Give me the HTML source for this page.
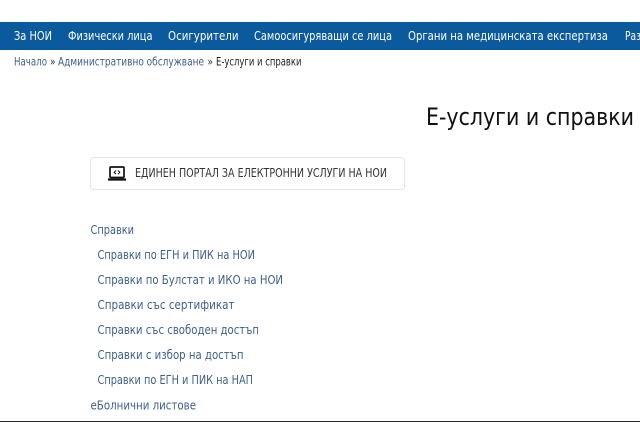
<!DOCTYPE html>
<html lang="bg">
<head>
<meta charset="utf-8">
<title>Е-услуги и справки</title>
<style>
html,body{margin:0;padding:0;width:640px;height:439px;overflow:hidden;background:#fff;}
svg{display:block;position:absolute;left:0;top:0;}
text{font-family:"DejaVu Sans","Liberation Sans",sans-serif;}
.n{font-size:12.5px;fill:#fff;}
.b{font-size:11.5px;fill:#3d5f8c;}
.l{font-size:12px;fill:#3d5f8c;}
</style>
</head>
<body>
<svg width="640" height="439" viewBox="0 0 640 439" xmlns="http://www.w3.org/2000/svg">
<rect x="0" y="22" width="640" height="28" fill="#0b5a9e"/>
<text class="n" x="14" y="40" textLength="38" lengthAdjust="spacingAndGlyphs">За НОИ</text>
<text class="n" x="68" y="40" textLength="84.5" lengthAdjust="spacingAndGlyphs">Физически лица</text>
<text class="n" x="168" y="40" textLength="70.5" lengthAdjust="spacingAndGlyphs">Осигурители</text>
<text class="n" x="254" y="40" textLength="138" lengthAdjust="spacingAndGlyphs">Самоосигуряващи се лица</text>
<text class="n" x="408" y="40" textLength="200" lengthAdjust="spacingAndGlyphs">Органи на медицинската експертиза</text>
<text class="n" x="625" y="40" textLength="16" lengthAdjust="spacingAndGlyphs">Раз</text>

<text class="b" x="14" y="65.5" textLength="33" lengthAdjust="spacingAndGlyphs">Начало</text>
<text class="b" x="50" y="65.5" style="fill:#333" textLength="5.5" lengthAdjust="spacingAndGlyphs">»</text>
<text class="b" x="58" y="65.5" textLength="146" lengthAdjust="spacingAndGlyphs">Административно обслужване</text>
<text class="b" x="207.5" y="65.5" style="fill:#333" textLength="5.5" lengthAdjust="spacingAndGlyphs">»</text>
<text class="b" x="216" y="65.5" style="fill:#222" textLength="85.5" lengthAdjust="spacingAndGlyphs">Е-услуги и справки</text>

<text x="426" y="125" font-size="24" fill="#111" textLength="208" lengthAdjust="spacingAndGlyphs">Е-услуги и справки</text>

<rect x="90.5" y="157.5" width="314" height="32" rx="3" fill="#fff" stroke="#e4e4e4"/>
<g fill="none" stroke="#111">
<rect x="110" y="167" width="14" height="10.5" rx="1" stroke-width="1.7"/>
<path d="M108 179.5H126" stroke-width="2.2"/>
<path d="M116 170.500l-1.800 1.800 1.800 1.800M118 170.500l1.800 1.800-1.800 1.800" stroke-width="1"/>
</g>
<text x="135" y="177" font-size="12" fill="#333" textLength="252" lengthAdjust="spacingAndGlyphs">ЕДИНЕН ПОРТАЛ ЗА ЕЛЕКТРОННИ УСЛУГИ НА НОИ</text>

<text class="l" x="90.5" y="234" textLength="43.5" lengthAdjust="spacingAndGlyphs">Справки</text>
<text class="l" x="97.5" y="259" textLength="157.5" lengthAdjust="spacingAndGlyphs">Справки по ЕГН и ПИК на НОИ</text>
<text class="l" x="97.5" y="284" textLength="185.5" lengthAdjust="spacingAndGlyphs">Справки по Булстат и ИКО на НОИ</text>
<text class="l" x="97.5" y="309" textLength="137" lengthAdjust="spacingAndGlyphs">Справки със сертификат</text>
<text class="l" x="97.5" y="334" textLength="161.5" lengthAdjust="spacingAndGlyphs">Справки със свободен достъп</text>
<text class="l" x="97.5" y="359" textLength="146" lengthAdjust="spacingAndGlyphs">Справки с избор на достъп</text>
<text class="l" x="97.5" y="384" textLength="155.5" lengthAdjust="spacingAndGlyphs">Справки по ЕГН и ПИК на НАП</text>
<text class="l" x="90.5" y="409.5" textLength="105.5" lengthAdjust="spacingAndGlyphs">еБолнични листове</text>

<rect x="0" y="421" width="640" height="1" fill="#2a2a2a"/>
</svg>
</body>
</html>
